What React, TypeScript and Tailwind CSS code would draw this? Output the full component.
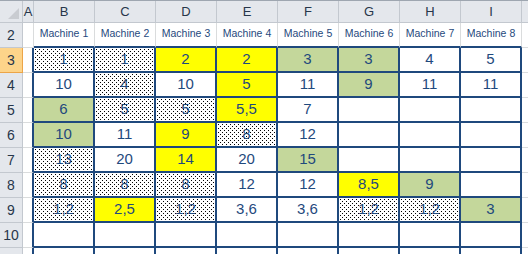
import React from "react";

type C = { v: string; f?: "d" | "y" | "g" };

const Y = (v: string): C => ({ v, f: "y" });
const G = (v: string): C => ({ v, f: "g" });
const D = (v: string): C => ({ v, f: "d" });
const N = (v: string): C => ({ v });
const E: C = { v: "" };

const rows: C[][] = [
  [D("1"), D("1"), Y("2"), Y("2"), G("3"), G("3"), N("4"), N("5")],
  [N("10"), D("4"), N("10"), Y("5"), N("11"), G("9"), N("11"), N("11")],
  [G("6"), D("5"), D("5"), Y("5,5"), N("7"), E, E, E],
  [G("10"), N("11"), Y("9"), D("8"), N("12"), E, E, E],
  [D("13"), N("20"), Y("14"), N("20"), G("15"), E, E, E],
  [D("8"), D("8"), D("8"), N("12"), N("12"), Y("8,5"), G("9"), E],
  [D("1,2"), Y("2,5"), D("1,2"), N("3,6"), N("3,6"), D("1,2"), D("1,2"), G("3")],
  [E, E, E, E, E, E, E, E],
  [E, E, E, E, E, E, E, E],
];

const cols = ["B", "C", "D", "E", "F", "G", "H", "I"];

const fillCls = (f?: string) =>
  f === "y"
    ? "bg-[#ffff00]"
    : f === "g"
    ? "bg-[#c4d79b]"
    : f === "d"
    ? "bg-white bg-[image:radial-gradient(circle_at_1.5px_1.5px,#000_0.5px,transparent_0.9px),radial-gradient(circle_at_1.5px_1.5px,#000_0.5px,transparent_0.9px)] bg-[length:4px_4px] bg-[position:0_0,2px_2px]"
    : "bg-white";

export default function App() {
  return (
    <div
      className="w-[528px] h-[254px] overflow-hidden bg-white border-t border-[#9ea6b0]"
      style={{ fontFamily: '"Liberation Sans", Arial, sans-serif' }}
    >
      <div className="grid grid-cols-[23px_11px_repeat(8,61px)_1fr] grid-rows-[22px_25px_repeat(9,25px)]">
        {/* header row */}
        <div className="relative bg-[#e4e7ec] border-r border-b border-[#c3c8cf]">
          <svg className="absolute right-[3px] bottom-[3px]" width="11" height="11" viewBox="0 0 11 11">
            <polygon points="11,0 11,11 0,11" fill="#c9ccd1" />
          </svg>
        </div>
        <div className="bg-[#e4e7ec] border-r border-b border-[#c3c8cf] flex items-center justify-center text-[13px] text-[#27364a]">
          A
        </div>
        {cols.map((c) => (
          <div
            key={c}
            className="bg-[#e4e7ec] border-r border-b border-[#c3c8cf] flex items-center justify-center text-[13px] text-[#27364a]"
          >
            {c}
          </div>
        ))}
        <div className="bg-[#e4e7ec] border-b border-[#c3c8cf]" />

        {/* row 2 */}
        <div className="bg-[#e4e7ec] border-r border-b border-[#c3c8cf] flex items-center justify-center text-[14px] text-[#27364a]">
          2
        </div>
        <div className="border-r border-b border-[#dadcdd]" />
        {cols.map((c, i) => (
          <div
            key={c}
            className="border-r border-[#dadcdd] border-b-2 border-b-[#1f497d] flex items-end justify-center pb-[4px] text-[10.5px] text-[#1f497d] whitespace-nowrap"
          >
            Machine {i + 1}
          </div>
        ))}
        <div className="border-b border-[#dadcdd]" />

        {rows.map((r, ri) => {
          const num = ri + 3;
          const sel = num === 3;
          return (
            <React.Fragment key={ri}>
              <div
                className={
                  sel
                    ? "bg-[#fdd48a] border-r border-b border-[#eca548] flex items-center justify-center text-[14px] text-[#27364a]"
                    : "bg-[#e4e7ec] border-r border-b border-[#c3c8cf] flex items-center justify-center text-[14px] text-[#27364a]"
                }
              >
                {num <= 10 ? num : ""}
              </div>
              <div className="border-b border-[#dadcdd] border-r-2 border-r-[#1f497d]" />
              {r.map((c, ci) => (
                <div
                  key={ci}
                  className={`${fillCls(c.f)} border-r-2 border-b-2 border-[#1f497d] flex items-center justify-center text-[15px] text-[#1f497d]`}
                >
                  {c.v}
                </div>
              ))}
              <div className="border-b border-[#dadcdd]" />
            </React.Fragment>
          );
        })}
      </div>
    </div>
  );
}
